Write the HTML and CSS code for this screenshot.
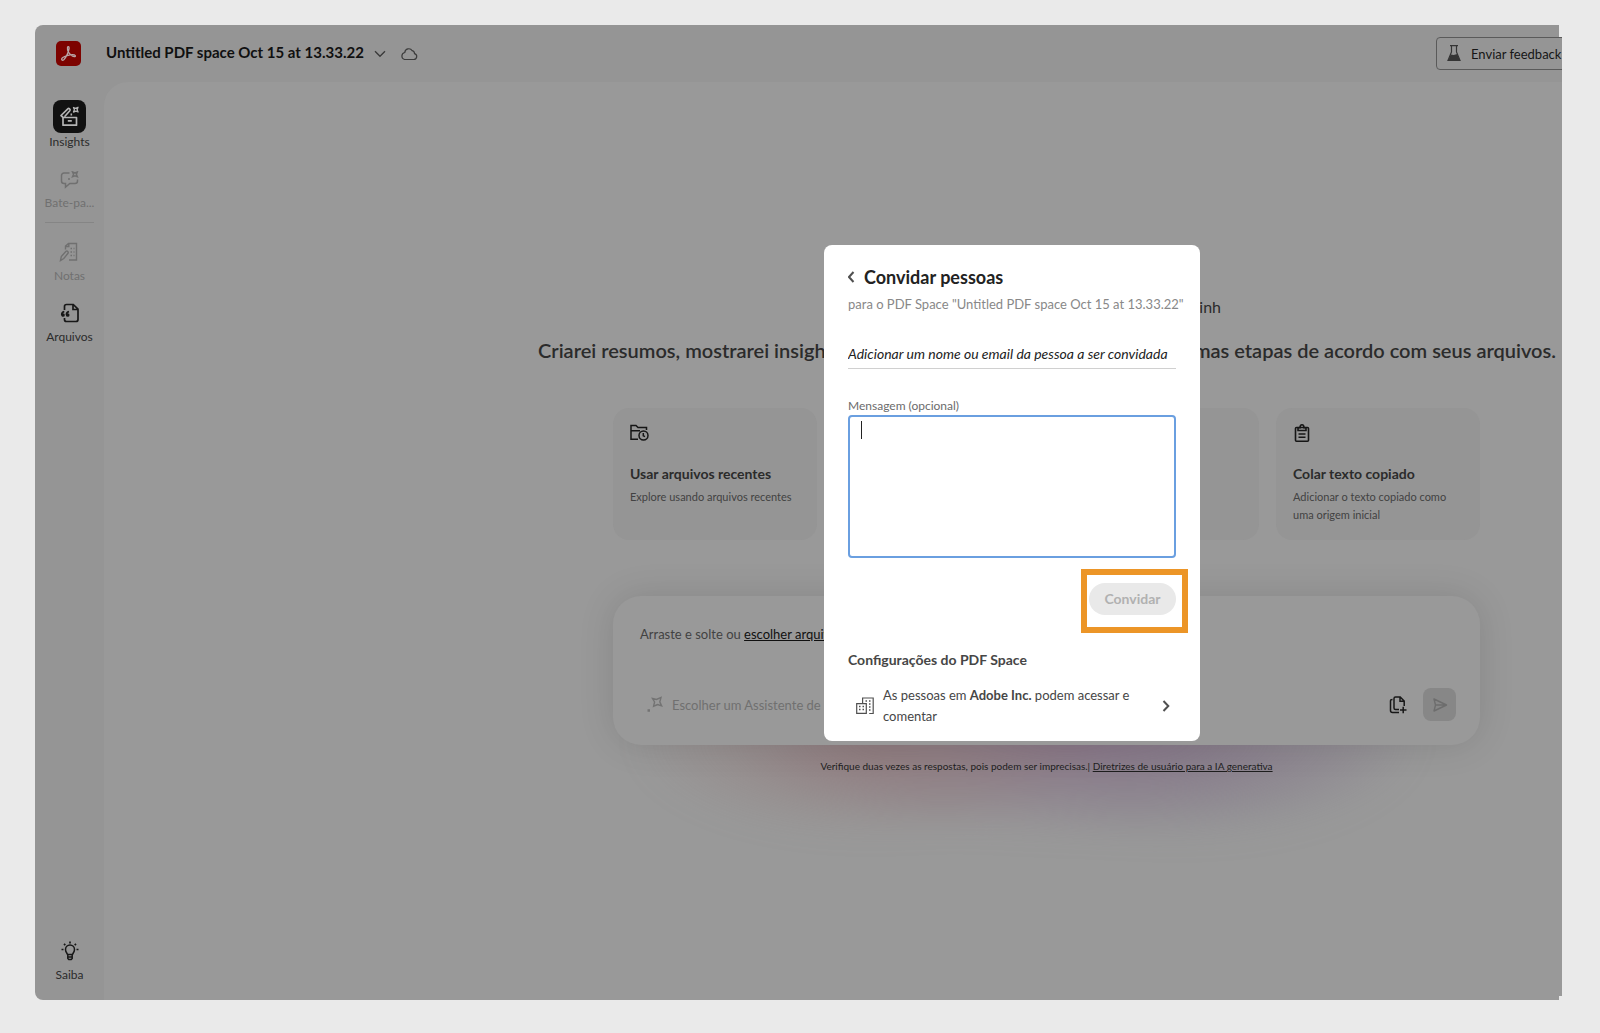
FILE: index.html
```html
<!DOCTYPE html>
<html lang="pt-BR">
<head>
<meta charset="utf-8">
<title>PDF Space</title>
<link rel="stylesheet" href="styles.css">
</head>
<body>
<div class="app">
  <header class="topbar">
    <svg class="logo" viewBox="0 0 25 25"><rect width="25" height="25" rx="5" fill="#7d0300"/><path d="M6 19c-1.500-1.500 2-3.500 5-4.400 3.500-1 7.500-1.200 8.300.1.600 1.500-2.200 1.300-4.300-.6-2.100-1.800-3.700-5.200-3.500-7.300.2-1.900 1.800-1.300 1.600.6-.3 3.500-3.200 9.300-5.300 11.300-.7.600-1.400.7-1.800.3z" fill="none" stroke="#b8a5a5" stroke-width="1.300"/></svg>
    <h1 class="doc-title">Untitled PDF space Oct 15 at 13.33.22</h1>
    <button class="icon-btn" aria-label="Mais opções"><svg width="12" height="8" viewBox="0 0 12 8"><path d="M1 1.200l5 5 5-5" fill="none" stroke="#3c3c3c" stroke-width="1.400"/></svg></button>
    <svg class="cloud" width="18" height="14" viewBox="0 0 18 14"><path d="M4.500 12.500h9.200a3 3 0 0 0 .8-5.900 3 3 0 0 0-2.300-2.900A4 4 0 0 0 4.800 5.500a3.600 3.600 0 0 0-.3 7z" fill="none" stroke="#3c3c3c" stroke-width="1.200"/></svg>
    <button class="feedback"><svg width="14" height="17" viewBox="0 0 14 17"><path d="M3 .7h8M4.500 1v6L1 15.500h12L9.500 7V1" fill="none" stroke="#353535" stroke-width="1.200"/><path d="M3.700 9.500l3 .6 3.600-1 2.700 6.800H1z" fill="#353535"/></svg>Enviar feedback</button>
  </header>
  <div class="body">
    <nav class="rail">
      <a class="rail-item" href="#"><span class="rail-active"><svg width="22" height="22" viewBox="0 0 22 22" fill="none" stroke="#b4b4b4" stroke-width="1.700" stroke-linejoin="round"><path d="M4 11.500h13.500v7.700H4zM8.800 14.800h4"/><path d="M4 11.300L2 9.500l6.800-6.700c1-1 3.100.6 2 2L5.500 10.700"/><path d="M14.500 1.500l2.100.9 2.400-1.100-.9 2.400 1 2.300-2.300-.9-2.300 1 .9-2.400z" stroke-width="1.300"/><path d="M11.500 8.500h1.600" stroke-width="1.800"/></svg></span>Insights</a>
      <a class="rail-item muted" href="#"><svg width="20" height="18" viewBox="0 0 20 18" fill="none" stroke="currentColor" stroke-width="1.500"><path d="M9.500 2H4a2.500 2.500 0 0 0-2.500 2.500V10A2.500 2.500 0 0 0 4 12.500h1.500v3.700l4.300-3.700H15a2.500 2.500 0 0 0 2.500-2.500V8.500"/><path d="M12.500 1l2.400 1 2.400-1-.9 2.400 1 2.300-2.500-.9-2.400 1 1-2.500zM8 8h2" stroke-width="1.400"/></svg>Bate-pa...</a>
      <hr class="rail-line">
      <a class="rail-item muted" href="#"><svg width="20" height="20" viewBox="0 0 20 20" fill="none" stroke="currentColor" stroke-width="1.400"><path d="M6.500 7.500V4l3-2.500h8V18H10M9.800 1.800V4.500H6.700M11.500 6.500h1.500M14.500 6.500h1M11.500 10h1.500M14.500 10h1M11.500 13.500h1.500M14.500 13.500h1"/><path d="M1.500 18.500l.8-4L7 9.300c1.200-1 2.800.6 2 2L4.800 16.500z"/></svg>Notas</a>
      <a class="rail-item" href="#"><svg width="20" height="20" viewBox="0 0 20 20" fill="none" stroke="#181818" stroke-width="1.700"><path d="M4.500 7V3.500a2 2 0 0 1 2-2h6.800L18 6.200v10.300a2 2 0 0 1-2 2H6.500a2 2 0 0 1-2-2V15M13 1.800v4.700h4.700"/><path d="M4.300 8.500C2.300 9 1.600 10.300 1.800 12M9 8.500c-2 .5-2.700 1.800-2.500 3.500"/><circle cx="3" cy="12" r="1" fill="#181818"/><circle cx="7.700" cy="12" r="1" fill="#181818"/></svg>Arquivos</a>
      <a class="rail-item last" href="#"><svg width="18" height="20" viewBox="0 0 18 20" fill="none" stroke="#181818" stroke-width="1.500"><path d="M6.500 13.500C6 12 4.500 11 4.500 8.500a4.500 4.500 0 0 1 9 0c0 2.500-1.500 3.500-2 5zM6.800 14v3.500l1 1h2.400l1-1V14M7 16h4"/><path d="M9 .5v2M3 2.800l1.300 1.300M15 2.800l-1.300 1.300M.5 8.500h2M15.500 8.500h2" stroke-width="1.700"/></svg>Saiba</a>
    </nav>
    <main class="main">
      <p class="greeting">inh</p>
      <h2 class="headline"><span>Criarei resumos, mostrarei insights</span><span>próximas etapas de acordo com seus arquivos.</span></h2>
      <div class="column">
        <div class="cards">
          <article class="card"><svg width="20" height="18" viewBox="0 0 20 18" fill="none" stroke="#161616" stroke-width="1.500"><path d="M8 15.200H1V1.500h5l2 2h8.500V6M1 6.700h9"/><circle cx="13.500" cy="11.500" r="4.500"/><path d="M13.300 9v2.800l1.700.8"/></svg><h3>Usar arquivos recentes</h3><p>Explore usando arquivos recentes</p></article>
          <article class="card"></article>
          <article class="card"></article>
          <article class="card"><svg width="18" height="20" viewBox="0 0 18 20" fill="none" stroke="#161616" stroke-width="1.600"><rect x="2.500" y="4.500" width="13" height="13.700" rx="1"/><path d="M5 7.500V4.700h2C7 .7 11 .7 11 4.700h2v2.800zM5.500 11h7M5.500 14.300h7"/></svg><h3>Colar texto copiado</h3><p>Adicionar o texto copiado como uma origem inicial</p></article>
        </div>
        <section class="composer">
          <p class="drop">Arraste e solte ou <a href="#">escolher arquivos</a></p>
          <div class="tools">
            <svg width="18" height="18" viewBox="0 0 18 18" fill="none" stroke="#737373" stroke-width="1.400"><path d="M6.500 2.500l4 .9 4.500-2-1.200 4.500 1.800 4-4-1.400-4 1.700 1-4.200z"/><path d="M1.500 14.500h2.500" stroke-width="2.500"/></svg>
            <button class="assistant">Escolher um Assistente de IA</button>
            <button class="icon-btn add" aria-label="Adicionar arquivos"><svg width="18" height="18" viewBox="0 0 18 18" fill="none" stroke="#181818" stroke-width="1.500"><path d="M10 13.500H6.500a1.500 1.500 0 0 1-1.500-1.500V2.500A1.500 1.500 0 0 1 6.500 1h4.700l4 4v5M11 1v4.300h4M3.500 3.500C1.500 3.500 1.500 4 1.500 5v9.500a2 2 0 0 0 2 2H10M11 14h6.500M14.200 10.700v6.600"/></svg></button>
            <button class="send" aria-label="Enviar"><svg width="16" height="16" viewBox="0 0 16 16" fill="none" stroke="#6d6d6d" stroke-width="1.400" stroke-linejoin="round"><path d="M2 2l12.500 6L2 14l1.500-6zM3.500 8h10"/></svg></button>
          </div>
        </section>
        <p class="notice">Verifique duas vezes as respostas, pois podem ser imprecisas.| <a href="#">Diretrizes de usuário para a IA generativa</a></p>
      </div>
    </main>
  </div>
  <section class="dialog" role="dialog" aria-labelledby="dlg-title">
    <div class="dlg-head"><button class="icon-btn" aria-label="Voltar"><svg width="8" height="12" viewBox="0 0 8 12"><path d="M5.500 1L1 6l4.500 5" fill="none" stroke="#505050" stroke-width="2"/></svg></button><h2 id="dlg-title">Convidar pessoas</h2></div>
    <p class="dlg-sub">para o PDF Space "Untitled PDF space Oct 15 at 13.33.22"</p>
    <input class="invitee" type="text" aria-label="Pessoa a ser convidada" placeholder="Adicionar um nome ou email da pessoa a ser convidada">
    <label class="msg-label" for="msg">Mensagem (opcional)</label>
    <div class="msg-wrap"><textarea id="msg" class="msg"></textarea><span class="caret"></span></div>
    <div class="actions"><span class="highlight"></span><button class="invite" disabled>Convidar</button></div>
    <h3 class="cfg">Configurações do PDF Space</h3>
    <button class="access"><svg class="bld" width="18" height="18" viewBox="0 0 18 18" fill="none" stroke="#505050" stroke-width="1.200"><path d="M6.600 6.500V1h10.600v15.500h-4M.7 6.600h9.600v9.800H.7z"/><path d="M9.500 4h1.500M13 4h1.500M13 7h1.500M13 10h1.500M13 13h1.500M3 9.500h1.500M6.500 9.500H8M3 12.500h1.500M6.500 12.500H8" stroke-width="1.600"/></svg><span class="access-text">As pessoas em <b>Adobe Inc.</b> podem acessar e comentar</span><svg width="8" height="12" viewBox="0 0 8 12"><path d="M1.500 1l4.800 5-4.800 5" fill="none" stroke="#505050" stroke-width="2"/></svg></button>
  </section>
</div>
</body>
</html>
```
FILE: styles.css
```css
* { box-sizing: border-box; }
body {
  margin: 0;
  padding: 25px 38px 33px 35px;
  background: #eaeaea;
  font-family: Lato, "Open Sans", sans-serif;
  font-size: 13px;
  color: #2b2b2b;
}
h1, h2, h3, p { margin: 0; }
button { font: inherit; color: inherit; border: 0; background: none; padding: 0; }
a { color: inherit; }
svg { flex: none; }

.app {
  position: relative;
  display: flex;
  flex-direction: column;
  min-height: calc(100vh - 58px);
  background: #959595;
  border-radius: 8px 0 0 8px;
  overflow: hidden;
  clip-path: polygon(0 0, calc(100% - 3px) 0, calc(100% - 3px) 12px, 100% 12px, 100% calc(100% - 4px), calc(100% - 3px) calc(100% - 4px), calc(100% - 3px) 100%, 0 100%);
}

.topbar { display: flex; align-items: center; height: 57px; padding-left: 21px; overflow: hidden; }
.logo { width: 25px; height: 25px; }
.doc-title { margin: 0 10px 0 25px; padding-bottom: 4px; font-size: 15px; line-height: 20px; font-weight: 700; color: #101010; white-space: nowrap; }
.icon-btn { display: flex; align-items: center; justify-content: center; }
.cloud { margin-left: 14px; }
.feedback {
  display: flex; align-items: center; gap: 10px; flex: none;
  margin-left: auto; margin-right: -12px; height: 33px; width: 138px;
  padding-left: 10px; border: 1px solid #5a5a5a; border-radius: 4px;
  color: #161616; white-space: nowrap;
}

.body { display: flex; flex: 1; }
.rail { display: flex; flex-direction: column; align-items: center; flex: none; width: 69px; padding: 17px 0 18px; }
.rail-item {
  display: flex; flex-direction: column; align-items: center; justify-content: flex-end; gap: 7px;
  height: 50px; margin-bottom: 11px; font-size: 12px; line-height: 14px; text-decoration: none; color: #2b2b2b;
}
.rail-item:first-child { gap: 2px; }
.rail-item.muted { color: #707070; }
.rail-item.last { margin: auto 0 0; }
.rail-active { display: flex; align-items: center; justify-content: center; width: 33px; height: 33px; border-radius: 8px; background: #111; }
.rail-line { width: 49px; margin: 1px 0 10px; border: 0; border-top: 1px solid #858585; }

.main { position: relative; z-index: 0; flex: 1; min-width: 0; padding: 213px 0 0 427px; background: #999; border-radius: 24px 0 0 0; }
.greeting { width: 690px; text-align: right; font-size: 16px; line-height: 24px; }
.headline { display: flex; justify-content: space-between; margin-top: 16px; padding: 0 6px 0 7px; font-size: 20px; line-height: 30px; font-weight: 600; white-space: nowrap; }
.column { width: 867px; max-width: 100%; margin: 43px auto 0; }
.cards { display: grid; grid-template-columns: repeat(4, 1fr); gap: 17px; }
.card { min-height: 132px; padding: 15px 17px; border-radius: 16px; background: #959595; }
.card svg { display: block; height: 20px; }
.card h3 { margin-top: 20px; font-size: 14px; line-height: 22px; }
.card p { margin-top: 3px; font-size: 11px; line-height: 18px; color: #424242; }

.composer {
  display: flex; flex-direction: column; justify-content: space-between;
  min-height: 149px; margin-top: 56px; padding: 28px 24px 24px 27px;
  border-radius: 28px; background: #999; position: relative;
  box-shadow: 0 0 36px rgba(0, 0, 0, .12);
}
.composer::before {
  content: ""; position: absolute; z-index: -1; left: 20px; right: 60px; bottom: -100px; height: 200px;
  background: radial-gradient(closest-side at 30% 48%, rgba(142, 112, 112, .6), transparent), radial-gradient(closest-side at 56% 48%, rgba(132, 108, 130, .75), transparent), radial-gradient(closest-side at 70% 50%, rgba(115, 112, 135, .4), transparent);
  filter: blur(14px);
}
.drop { line-height: 20px; color: #424242; }
.drop a { color: #101010; }
.tools { display: flex; align-items: center; margin-left: 6px; }
.assistant { margin-left: 8px; line-height: 20px; color: #707070; }
.add { margin-left: auto; }
.send { display: flex; align-items: center; justify-content: center; width: 33px; height: 33px; margin-left: 16px; border-radius: 8px; background: #878787; }
.notice { position: relative; margin-top: 12px; text-align: center; font-size: 10px; line-height: 18px; color: #1d1d1d; }

.dialog {
  position: absolute; left: 789px; top: 220px; width: 376px; padding: 20px 24px 14px;
  border-radius: 8px; background: #fff; color: #464646; z-index: 1;
}
.dlg-head { display: flex; align-items: center; gap: 8px; height: 24px; }
.dlg-head h2 { font-size: 18px; line-height: 24px; color: #222; }
.dlg-head .icon-btn { width: 8px; }
.dlg-sub { margin-top: 5px; line-height: 20px; color: #888; white-space: nowrap; }
.invitee {
  display: block; width: 100%; height: 30px; margin-top: 25px; padding: 0; border: 0; border-bottom: 1px solid #d0d0d0;
  font: italic 14px/20px Lato, sans-serif; outline: none;
}
.invitee::placeholder { color: #222; opacity: 1; }
.msg-label { display: block; margin-top: 28px; font-size: 12px; line-height: 18px; color: #6b6b6b; }
.msg-wrap { position: relative; }
.msg { display: block; width: 100%; height: 143px; padding: 8px 12px; border: 2px solid #6a9fe0; border-radius: 4px; resize: none; outline: none; font: inherit; }
.caret { position: absolute; left: 13px; top: 6px; width: 1px; height: 18px; background: #222; }
.actions { position: relative; display: flex; justify-content: flex-end; margin-top: 25px; }
.highlight { position: absolute; right: -12px; top: -14px; width: 107px; height: 64px; border: 6px solid #ec9527; }
.invite { position: relative; width: 87px; height: 32px; padding-bottom: 2px; border-radius: 16px; background: #e9e9e9; color: #b1b1b1; font-size: 14px; font-weight: 700; }
.cfg { margin-top: 35px; font-size: 14px; line-height: 20px; }
.access { display: flex; align-items: center; width: 100%; margin-top: 15px; padding: 0 6px 0 8px; text-align: left; line-height: 21px; }
.access-text { flex: 1; margin: 0 20px 0 9px; }
```
